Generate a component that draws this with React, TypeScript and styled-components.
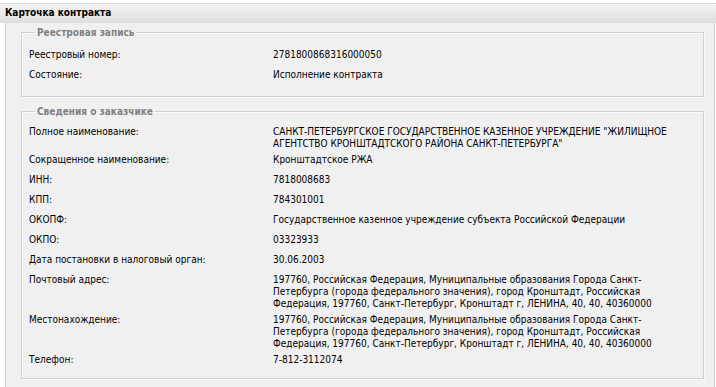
import React from "react";
import styled, { createGlobalStyle } from "styled-components";

const Global = createGlobalStyle`
  html, body { margin: 0; padding: 0; background: #ffffff; }
  body {
    font-family: "DejaVu Sans Condensed", "DejaVu Sans", sans-serif;
    font-stretch: condensed;
    font-size: 10px;
    color: #000;
  }
`;

const Card = styled.div`
  margin-top: 3px;
  border-top: 1px solid #d6d6d6;
  width: 716px;
  box-sizing: border-box;
`;

const Header = styled.div`
  height: 19px;
  line-height: 18px;
  padding-left: 5px;
  font-weight: bold;
  color: #000;
  background: linear-gradient(#f4f4f4, #dedede);
`;

const Body = styled.div`
  margin: 0 1px 0 5px;
  border-left: 1px solid #d0d0d0;
  border-right: 1px solid #d0d0d0;
  background: #f0f0f0;
  padding: 3px 10px 8px 15px;
  display: flex;
  flex-direction: column;
  gap: 8px;
  min-height: 364px;
  box-sizing: border-box;
`;

const Group = styled.fieldset<{ $bottom: number }>`
  margin: 0;
  padding: 6px 6px ${(p) => p.$bottom}px 7px;
  border: 1px solid #d0d0d0;
  box-shadow: inset 1px 1px 0 #fafafa, 1px 1px 0 #fafafa;
`;

const Legend = styled.legend`
  margin-left: 6px;
  padding: 0 2px;
  font-weight: bold;
  color: #808080;
  line-height: 13px;
`;

const Row = styled.div<{ $tight?: boolean }>`
  display: grid;
  grid-template-columns: 244px 1fr;
  min-height: 20px;
  padding-top: ${(p) => (p.$tight ? "2px" : "4px")};
  box-sizing: border-box;
  line-height: 12px;
`;

const Label = styled.div`
  color: #000;
`;

const Value = styled.div`
  color: #000;
`;

const Line = styled.div`
  white-space: nowrap;
`;

type Item = { label: string; value: string[]; tight?: boolean };

const registry: Item[] = [
  { label: "Реестровый номер:", value: ["2781800868316000050"] },
  { label: "Состояние:", value: ["Исполнение контракта"] },
];

const address = [
  "197760, Российская Федерация, Муниципальные образования Города Санкт-",
  "Петербурга (города федерального значения), город Кронштадт, Российская",
  "Федерация, 197760, Санкт-Петербург, Кронштадт г, ЛЕНИНА, 40, 40, 40360000",
];

const customer: Item[] = [
  {
    label: "Полное наименование:",
    value: [
      'САНКТ-ПЕТЕРБУРГСКОЕ ГОСУДАРСТВЕННОЕ КАЗЕННОЕ УЧРЕЖДЕНИЕ "ЖИЛИЩНОЕ',
      'АГЕНТСТВО КРОНШТАДТСКОГО РАЙОНА САНКТ-ПЕТЕРБУРГА"',
    ],
    tight: true,
  },
  { label: "Сокращенное наименование:", value: ["Кронштадтское РЖА"] },
  { label: "ИНН:", value: ["7818008683"] },
  { label: "КПП:", value: ["784301001"] },
  { label: "ОКОПФ:", value: ["Государственное казенное учреждение субъекта Российской Федерации"] },
  { label: "ОКПО:", value: ["03323933"] },
  { label: "Дата постановки в налоговый орган:", value: ["30.06.2003"] },
  { label: "Почтовый адрес:", value: address },
  { label: "Местонахождение:", value: address },
  { label: "Телефон:", value: ["7-812-3112074"] },
];

const Section = ({ title, items, bottom }: { title: string; items: Item[]; bottom: number }) => (
  <Group $bottom={bottom}>
    <Legend>{title}</Legend>
    {items.map((it) => (
      <Row key={it.label} $tight={it.tight}>
        <Label>{it.label}</Label>
        <Value>
          {it.value.map((l, i) => (
            <Line key={i}>{l}</Line>
          ))}
        </Value>
      </Row>
    ))}
  </Group>
);

export default function App() {
  return (
    <>
      <Global />
      <Card>
        <Header>Карточка контракта</Header>
        <Body>
          <Section title="Реестровая запись" items={registry} bottom={11} />
          <Section title="Сведения о заказчике" items={customer} bottom={8} />
        </Body>
      </Card>
    </>
  );
}
